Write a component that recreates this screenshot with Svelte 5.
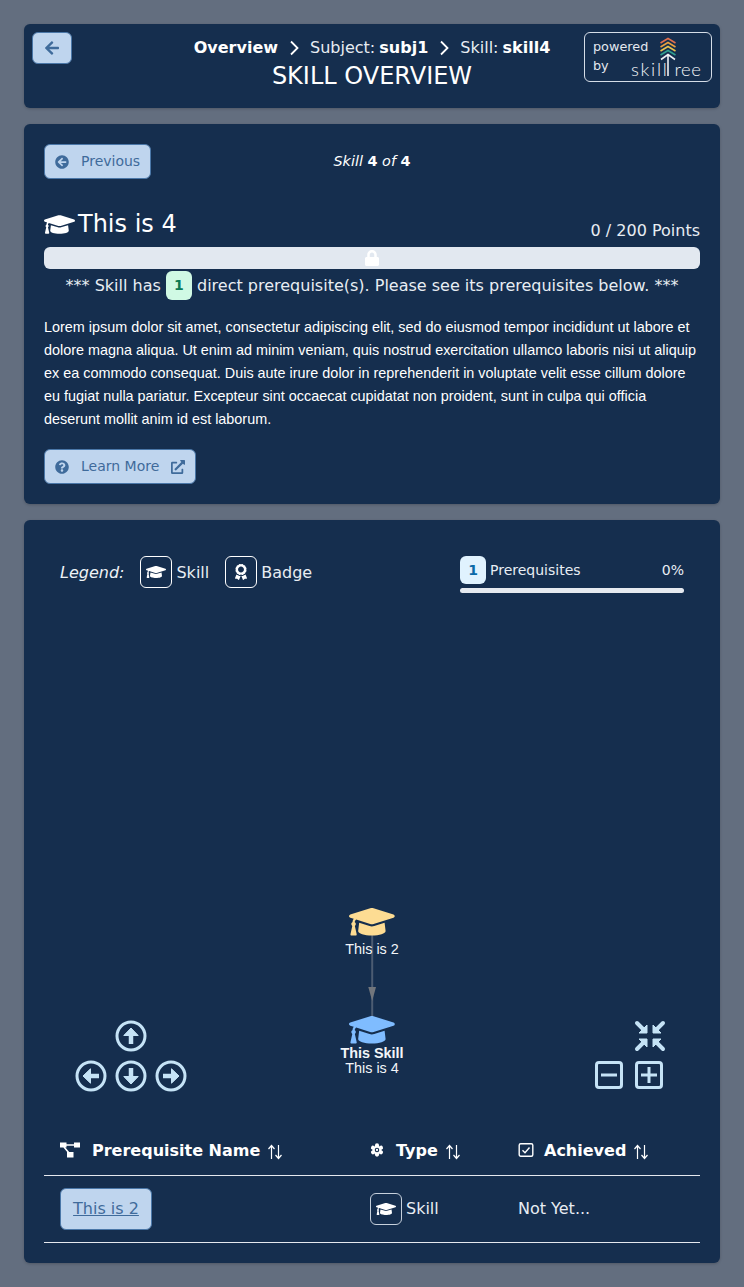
<script>
  const cap = "M622.34 153.2L343.4 67.5c-15.2-4.67-31.6-4.67-46.79 0L17.66 153.2c-23.54 7.23-23.54 38.36 0 45.59l48.63 14.94c-10.67 13.19-17.23 29.28-17.88 46.9C38.78 266.15 32 276.11 32 288c0 10.78 5.68 19.85 13.86 25.65L20.33 428.53C18.11 438.52 25.71 448 35.94 448h56.11c10.24 0 17.84-9.48 15.62-19.47L82.14 313.65C90.32 307.85 96 298.78 96 288c0-11.57-6.47-21.25-15.66-26.87.76-15.02 8.44-28.3 20.69-36.72L296.6 285.5c9.06 2.78 26.44 6.25 46.79 0l278.95-85.7c23.55-7.24 23.55-38.36 0-45.6zM352.79 315.09c-28.53 8.76-52.84 3.92-65.59 0l-145.02-44.55L128 384c0 35.35 85.96 64 192 64s192-28.65 192-64l-14.18-113.47-145.03 44.56z";
  const award = "M97.12 362.63c-8.69-8.69-4.16-6.24-25.12-11.85-9.51-2.55-17.87-7.45-25.43-13.32L1.2 448.7c-4.39 10.77 3.81 22.47 15.43 22.03l52.69-2.01L105.56 507c8 8.44 22.04 5.81 26.43-4.96l52.05-127.62c-10.84 6.04-22.87 9.58-35.31 9.58-19.5 0-37.82-7.59-51.61-21.37zM382.8 448.7l-45.37-111.24c-7.56 5.88-15.92 10.77-25.43 13.32-21.07 5.64-16.45 3.18-25.12 11.85-13.79 13.78-32.12 21.37-51.62 21.37-12.44 0-24.47-3.55-35.31-9.58L252 502.04c4.39 10.77 18.44 13.4 26.43 4.96l36.25-38.28 52.69 2.01c11.62.44 19.82-11.27 15.43-22.03zM263 340c15.28-15.55 17.03-14.21 38.79-20.14 13.89-3.79 24.75-14.84 28.47-28.98 7.48-28.4 5.54-24.97 25.95-45.75 10.17-10.35 14.14-25.44 10.42-39.58-7.47-28.38-7.48-24.42 0-52.83 3.72-14.14-.25-29.23-10.42-39.58-20.41-20.78-18.47-17.36-25.95-45.75-3.72-14.14-14.58-25.19-28.47-28.98-27.88-7.61-24.52-5.62-44.95-26.41-10.17-10.35-25-14.4-38.89-10.61-27.87 7.6-23.98 7.61-51.9 0-13.89-3.79-28.72.25-38.89 10.61-20.41 20.78-17.05 18.8-44.94 26.41-13.89 3.79-24.75 14.84-28.47 28.98-7.47 28.39-5.54 24.97-25.95 45.75-10.17 10.35-14.15 25.44-10.42 39.58 7.47 28.36 7.48 24.4 0 52.82-3.72 14.14.25 29.23 10.42 39.59 20.41 20.78 18.47 17.35 25.95 45.75 3.72 14.14 14.58 25.19 28.47 28.98C104.6 325.96 106.27 325 121 340c13.23 13.47 33.84 15.88 49.74 5.82a39.676 39.676 0 0 1 42.53 0c15.89 10.06 36.5 7.65 49.73-5.82zM97.66 175.96c0-53.03 42.24-96.02 94.34-96.02s94.34 42.99 94.34 96.02-42.24 96.02-94.34 96.02-94.34-42.99-94.34-96.02z";
  const lock = "M400 224h-24v-72C376 68.2 307.8 0 224 0S72 68.2 72 152v72H48c-26.5 0-48 21.5-48 48v192c0 26.5 21.5 48 48 48h352c26.5 0 48-21.5 48-48V272c0-26.5-21.5-48-48-48zm-104 0H152v-72c0-39.7 32.3-72 72-72s72 32.3 72 72v72z";
  const arrowLeft = "M257.5 445.1l-22.2 22.2c-9.4 9.4-24.6 9.4-33.9 0L7 273c-9.4-9.4-9.4-24.6 0-33.9L201.4 44.7c9.4-9.4 24.6-9.4 33.9 0l22.2 22.2c9.5 9.5 9.3 25-.4 34.3L136.6 216H424c13.3 0 24 10.7 24 24v32c0 13.3-10.7 24-24 24H136.6l120.5 114.8c9.8 9.3 10 24.8.4 34.3z";
  const circleLeft = "M256 504C119 504 8 393 8 256S119 8 256 8s248 111 248 248-111 248-248 248zm28.9-143.6L209.4 288H392c13.3 0 24-10.7 24-24v-16c0-13.3-10.7-24-24-24H209.4l75.5-72.4c9.7-9.3 9.9-24.8.4-34.3l-11-10.9c-9.4-9.4-24.6-9.4-33.9 0L107.7 239c-9.4 9.4-9.4 24.6 0 33.9l132.7 132.7c9.4 9.4 24.6 9.4 33.9 0l11-10.9c9.5-9.5 9.3-25-.4-34.3z";
  const question = "M504 256c0 136.997-111.043 248-248 248S8 392.997 8 256C8 119.083 119.043 8 256 8s248 111.083 248 248zM262.655 90c-54.497 0-89.255 22.957-116.549 63.758-3.536 5.286-2.353 12.415 2.715 16.258l34.699 26.31c5.205 3.947 12.621 3.008 16.665-2.122 17.864-22.658 30.113-35.797 57.303-35.797 20.429 0 45.698 13.148 45.698 32.958 0 14.976-12.363 22.667-32.534 33.976C247.128 238.528 216 254.941 216 296v4c0 6.627 5.373 12 12 12h56c6.627 0 12-5.373 12-12v-1.333c0-28.462 83.186-29.647 83.186-106.667 0-58.002-60.165-102-116.531-102zM256 338c-25.365 0-46 20.635-46 46 0 25.364 20.635 46 46 46s46-20.636 46-46c0-25.365-20.635-46-46-46z";
  const external = "M432,320H400a16,16,0,0,0-16,16V448H64V128H208a16,16,0,0,0,16-16V80a16,16,0,0,0-16-16H48A48,48,0,0,0,0,112V464a48,48,0,0,0,48,48H400a48,48,0,0,0,48-48V336A16,16,0,0,0,432,320ZM488,0h-128c-21.37,0-32.05,25.91-17,41l35.73,35.73L135,320.37a24,24,0,0,0,0,34L157.67,377a24,24,0,0,0,34,0L435.28,133.32,471,169c15,15,41,4.5,41-17V24A24,24,0,0,0,488,0Z";
  const navArrows = [
    { x: 131, y: 1036, r: 0 },
    { x: 91, y: 1076, r: -90 },
    { x: 131, y: 1076, r: 180 },
    { x: 171, y: 1076, r: 90 }
  ];
  const gearTeeth = [0, 60, 120, 180, 240, 300];
</script>

{#snippet sortIcon()}
  <svg class="sort" viewBox="0 0 16 16" aria-hidden="true">
    <path d="M4.5 15V2M1.5 5L4.5 1.5L7.5 5M11.5 1V14M8.5 11L11.5 14.5L14.5 11" />
  </svg>
{/snippet}

{#snippet skillBox(cls)}
  <span class="iconbox {cls}">
    <svg viewBox="0 0 640 512" class="boxcap" aria-hidden="true"><path d={cap} /></svg>
  </span>
{/snippet}

<div class="page">
  <header class="card head">
    <button class="btn back" aria-label="Back">
      <svg viewBox="0 0 448 512" aria-hidden="true"><path d={arrowLeft} /></svg>
    </button>
    <div class="headmid">
      <nav class="crumbs">
        <b>Overview</b>
        <svg class="chev" viewBox="0 0 10 16" aria-hidden="true"><path d="M2 1.5L8.5 8L2 14.5" /></svg>
        <span>Subject: <b>subj1</b></span>
        <svg class="chev" viewBox="0 0 10 16" aria-hidden="true"><path d="M2 1.5L8.5 8L2 14.5" /></svg>
        <span>Skill: <b>skill4</b></span>
      </nav>
      <h1>SKILL OVERVIEW</h1>
    </div>
    <div class="powered">
      <div class="powtext"><span>powered</span><span>by</span></div>
      <svg class="logo" viewBox="0 0 76 46" aria-hidden="true">
        <g fill="none" stroke-width="1.6">
          <path d="M32.5 9L40 4.5L47.5 9" stroke="#e0704f" />
          <path d="M32.5 13L40 8.5L47.5 13" stroke="#eba03f" />
          <path d="M32.5 17L40 12.5L47.5 17" stroke="#e9c24f" />
          <path d="M32.5 21L40 16.5L47.5 21" stroke="#2f9f90" />
          <path d="M33 25.5L40 20.5L47 25.5M40 21V42" stroke="#eef1f5" />
        </g>
        <text x="3" y="41.5" class="logotext sk">skill</text>
        <text x="46.5" y="41.5" class="logotext">ree</text>
      </svg>
    </div>
  </header>

  <section class="card overview">
    <div class="navrow">
      <button class="btn prev">
        <svg viewBox="0 0 512 512" aria-hidden="true"><path d={circleLeft} /></svg>
        <span>Previous</span>
      </button>
      <div class="counter"><i>Skill</i> <b>4</b> <i>of</i> <b>4</b></div>
    </div>
    <div class="titlerow">
      <h2>
        <svg viewBox="0 0 640 512" aria-hidden="true"><path d={cap} /></svg>
        <span>This is 4</span>
      </h2>
      <div class="points">0 / 200 Points</div>
    </div>
    <div class="bar">
      <svg viewBox="0 0 448 512" aria-hidden="true"><path d={lock} /></svg>
    </div>
    <p class="prereq">*** Skill has <span class="pill">1</span> direct prerequisite(s). Please see its prerequisites below. ***</p>
    <p class="desc">Lorem ipsum dolor sit amet, consectetur adipiscing elit, sed do eiusmod tempor incididunt ut labore et dolore magna aliqua. Ut enim ad minim veniam, quis nostrud exercitation ullamco laboris nisi ut aliquip ex ea commodo consequat. Duis aute irure dolor in reprehenderit in voluptate velit esse cillum dolore eu fugiat nulla pariatur. Excepteur sint occaecat cupidatat non proident, sunt in culpa qui officia deserunt mollit anim id est laborum.</p>
    <button class="btn learn">
      <svg viewBox="0 0 512 512" aria-hidden="true"><path d={question} /></svg>
      <span>Learn More</span>
      <svg viewBox="0 0 512 512" class="ext" aria-hidden="true"><path d={external} /></svg>
    </button>
  </section>

  <section class="card graphcard">
    <div class="legendrow">
      <div class="legend">
        <i>Legend:</i>
        <div class="legitem">{@render skillBox('')}<span>Skill</span></div>
        <div class="legitem">
          <span class="iconbox"><svg viewBox="0 0 384 512" class="boxaward" aria-hidden="true"><path d={award} /></svg></span>
          <span>Badge</span>
        </div>
      </div>
      <div class="progress">
        <div class="progtop">
          <span class="countbadge">1</span>
          <span class="proglabel">Prerequisites</span>
          <span class="pct">0%</span>
        </div>
        <div class="progbar"></div>
      </div>
    </div>

    <svg class="graph" viewBox="44 600 656 510" role="img" aria-label="Prerequisite graph">
      <path d="M372.2 935V1016" class="edge" />
      <path d="M368.3 987L372.2 1001L376 987Z" class="arrowhead" />
      <path d={cap} transform="translate(349 903.5) scale(0.0715)" fill="#fddc93" />
      <text x="372" y="954" class="nodetext">This is 2</text>
      <path d={cap} transform="translate(349 1011.5) scale(0.0715)" fill="#7fbcff" />
      <text x="372" y="1058" class="nodetext bold">This Skill</text>
      <text x="372" y="1073" class="nodetext">This is 4</text>

      {#each navArrows as a}
        <g transform="translate({a.x} {a.y}) rotate({a.r})" class="navicon">
          <circle r="14" />
          <path d="M0 8V-2" class="shaft" />
          <path d="M-7.2 -0.5L0 -8L7.2 -0.5Z" class="head-tri" />
        </g>
      {/each}

      <g class="navicon" transform="translate(650 1036)">
        <g class="shaft2">
          <path d="M-13 -13L-6 -6M13 -13L6 -6M-13 13L-6 6M13 13L6 6" />
        </g>
        <path class="tri" d="M-11 -3H-3V-11ZM11 -3H3V-11ZM-11 3H-3V11ZM11 3H3V11Z" />
      </g>
      <g class="navicon" transform="translate(609 1075)">
        <rect x="-12.5" y="-12.5" width="25" height="25" rx="2.5" />
        <path class="shaft3" d="M-8 0H8" />
      </g>
      <g class="navicon" transform="translate(649 1075)">
        <rect x="-12.5" y="-12.5" width="25" height="25" rx="2.5" />
        <path class="shaft3" d="M-8 0H8M0 -8V8" />
      </g>
    </svg>

    <table>
      <colgroup><col class="c1" /><col class="c2" /><col class="c3" /></colgroup>
      <thead>
        <tr>
          <th>
            <span class="thin">
              <svg class="thicon" viewBox="0 0 20 16" aria-hidden="true">
                <rect x="0" y="0.5" width="6.5" height="5" />
                <rect x="14" y="0.5" width="6" height="5" />
                <rect x="7" y="10" width="6.5" height="5.5" />
                <path d="M6 3H14M4 5L9 11" class="treeline" />
              </svg>
              <span>Prerequisite Name</span>
              {@render sortIcon()}
            </span>
          </th>
          <th>
            <span class="thin">
              <svg class="thicon gear" viewBox="0 0 16 16" aria-hidden="true">
                {#each gearTeeth as t}
                  <circle cx="8" cy="2.8" r="2.4" transform="rotate({t} 8 8)" />
                {/each}
                <circle cx="8" cy="8" r="5" />
                <circle cx="8" cy="8" r="2.6" class="gearhole" />
                <circle cx="8" cy="8" r="1.3" />
              </svg>
              <span>Type</span>
              {@render sortIcon()}
            </span>
          </th>
          <th>
            <span class="thin">
              <svg class="thicon small" viewBox="0 0 16 16" aria-hidden="true">
                <rect x="1.2" y="1.7" width="13.6" height="12.6" rx="1.5" class="chk" />
                <path d="M4.5 8.2L7 10.7L11.5 5.5" class="chk" />
              </svg>
              <span>Achieved</span>
              {@render sortIcon()}
            </span>
          </th>
        </tr>
      </thead>
      <tbody>
        <tr>
          <td><button class="btn link"><u>This is 2</u></button></td>
          <td><div class="legitem">{@render skillBox('dim')}<span>Skill</span></div></td>
          <td>Not Yet...</td>
        </tr>
      </tbody>
    </table>
  </section>
</div>

<style>
  :global(body) {
    margin: 0;
    background: #636e7f;
  }
  .page {
    padding: 24px;
    display: flex;
    flex-direction: column;
    gap: 16px;
    font-family: "DejaVu Sans", sans-serif;
    color: #fff;
  }
  .card {
    background: #152e4e;
    border-radius: 6px;
    box-shadow: 0 1px 3px rgba(0, 0, 0, 0.2);
  }
  .btn {
    font-family: inherit;
    font-size: 14px;
    background: #bfd5ee;
    color: #3f6b9b;
    border: 1px solid #4a77a8;
    border-radius: 6px;
    display: flex;
    align-items: center;
    padding: 0;
    box-sizing: border-box;
  }
  .btn svg {
    fill: #3f6b9b;
    flex: none;
  }

  .head {
    display: grid;
    grid-template-columns: 1fr auto 1fr;
    padding: 8px;
    height: 84px;
    box-sizing: border-box;
  }
  .back {
    width: 40px;
    height: 32px;
    justify-content: center;
    justify-self: start;
  }
  .back svg { width: 16px; height: 16px; }
  .headmid { text-align: center; }
  .crumbs {
    display: flex;
    align-items: center;
    font-size: 16px;
    line-height: 24px;
    height: 24px;
    margin-top: 4px;
    color: #e8edf3;
  }
  .crumbs span { word-spacing: -1px; }
  .crumbs b { color: #fff; }
  .chev {
    width: 10px;
    height: 16px;
    margin: 0 11px;
    fill: none;
    stroke: #fff;
    stroke-width: 1.8;
  }
  h1 {
    font-size: 24px;
    font-weight: 400;
    line-height: 32px;
    margin: 0;
  }
  .powered {
    justify-self: end;
    width: 128px;
    height: 50px;
    box-sizing: border-box;
    border: 1px solid #d5dde7;
    border-radius: 6px;
    position: relative;
    display: flex;
  }
  .powtext {
    display: flex;
    flex-direction: column;
    font-size: 12.8px;
    line-height: 19px;
    color: #e3e8ef;
    padding: 4px 0 0 8px;
  }
  .logo {
    position: absolute;
    left: 43px;
    top: 1px;
    width: 76px;
    height: 46px;
  }
  .logotext {
    font-family: "Lato", sans-serif;
    font-weight: 300;
    font-size: 18.5px;
    letter-spacing: 0.5px;
    fill: #f4f6f9;
  }
  .logotext.sk { letter-spacing: 1.7px; }

  .overview {
    padding: 20px;
    height: 380px;
    box-sizing: border-box;
  }
  .navrow {
    display: grid;
    grid-template-columns: 1fr auto 1fr;
    align-items: center;
  }
  .prev {
    width: 107px;
    height: 35px;
    padding: 0 0 1px 10px;
    gap: 12px;
  }
  .prev svg, .learn svg { width: 14px; height: 14px; margin-top: 1px; }
  .counter {
    font-size: 14.4px;
    white-space: pre-wrap;
    color: #fff;
    margin-top: -2px;
  }
  .titlerow {
    display: flex;
    justify-content: space-between;
    align-items: flex-end;
    height: 35px;
    margin-top: 29px;
  }
  h2 {
    margin: 0;
    align-self: flex-start;
    font-size: 24px;
    line-height: 32px;
    font-weight: 400;
    display: flex;
    align-items: center;
    gap: 3px;
  }
  h2 svg {
    width: 31px;
    height: 25px;
    fill: #fff;
  }
  .points {
    font-size: 16px;
    line-height: 24px;
    color: #e8edf3;
  }
  .bar {
    height: 22px;
    background: #e2e8f0;
    border-radius: 6px;
    margin-top: 4px;
    display: flex;
    justify-content: center;
    padding-top: 3px;
    box-sizing: border-box;
  }
  .bar svg {
    width: 14px;
    height: 16px;
    fill: #fff;
  }
  .prereq {
    margin: 2px 0 0;
    font-size: 16px;
    line-height: 29px;
    height: 29px;
    text-align: center;
    color: #e8edf3;
  }
  .pill {
    display: inline-block;
    width: 26px;
    height: 29px;
    line-height: 29px;
    border-radius: 6px;
    background: #d0f9e4;
    color: #0d7a55;
    font-size: 14px;
    font-weight: 700;
    vertical-align: top;
  }
  .desc {
    margin: 16px 0 0;
    font-family: "Liberation Sans", sans-serif;
    font-size: 14.4px;
    line-height: 23px;
    color: #fff;
  }
  .learn {
    width: 152px;
    height: 35px;
    padding: 0 0 1px 10px;
    margin-top: 18px;
  }
  .learn span { margin-left: 12px; }
  .learn .ext { margin-left: 12px; }

  .graphcard {
    padding: 20px;
    height: 743px;
    box-sizing: border-box;
  }
  .legendrow {
    display: flex;
    justify-content: space-between;
    padding: 16px 16px 0;
    height: 60px;
    box-sizing: border-box;
  }
  .legend {
    display: flex;
    align-items: center;
    font-size: 16px;
    height: 32px;
    gap: 16px;
    color: #eef2f6;
  }
  .legitem {
    display: flex;
    align-items: center;
    gap: 4px;
    font-size: 16px;
    color: #e8edf3;
  }
  .iconbox {
    width: 32px;
    height: 32px;
    box-sizing: border-box;
    border: 1px solid #fff;
    border-radius: 6px;
    display: flex;
    align-items: center;
    justify-content: center;
  }
  .iconbox.dim { border-color: #c6d0dc; }
  .boxcap { width: 20px; height: 16px; fill: #fff; }
  .boxaward { width: 12px; height: 16px; fill: #fff; }
  .progress { width: 224px; }
  .progtop {
    display: flex;
    align-items: center;
    height: 28px;
    font-size: 14px;
    color: #e8edf3;
  }
  .countbadge {
    width: 26px;
    height: 28px;
    border-radius: 6px;
    background: #e0f2fe;
    color: #0a6aa8;
    font-weight: 700;
    font-size: 14px;
    line-height: 28px;
    text-align: center;
    margin-right: 4px;
  }
  .pct { margin-left: auto; }
  .progbar {
    height: 5px;
    margin-top: 4px;
    background: #e5e9ef;
    border-radius: 3px;
  }

  .graph {
    display: block;
    width: 656px;
    height: 510px;
  }
  .edge { stroke: #4c5c72; stroke-width: 2; fill: none; }
  .arrowhead { fill: #72767c; }
  .nodetext {
    font-family: "Liberation Sans", sans-serif;
    font-size: 14.4px;
    fill: #f2f5f8;
    text-anchor: middle;
  }
  .nodetext.bold { font-weight: 700; }
  .navicon circle, .navicon rect {
    fill: none;
    stroke: #c5e3f6;
    stroke-width: 3;
  }
  .navicon .shaft { stroke: #c5e3f6; stroke-width: 4.5; fill: none; }
  .navicon .head-tri { fill: #c5e3f6; stroke: #c5e3f6; stroke-width: 1; stroke-linejoin: round; }
  .navicon .shaft2 path { stroke: #c5e3f6; stroke-width: 4; fill: none; stroke-linecap: round; }
  .navicon .tri { fill: #c5e3f6; stroke: #c5e3f6; stroke-linejoin: round; }
  .navicon .shaft3 { stroke: #c5e3f6; stroke-width: 3; fill: none; }

  table {
    width: 656px;
    border-collapse: collapse;
    table-layout: fixed;
    font-size: 16px;
    color: #e8edf3;
  }
  .c1 { width: 310px; }
  .c2 { width: 148px; }
  th {
    text-align: left;
    height: 65px;
    padding: 30px 16px 0;
    box-sizing: border-box;
    border-bottom: 1px solid #e5e9ef;
    font-weight: 700;
    color: #fff;
    vertical-align: top;
  }
  .thin {
    display: flex;
    align-items: center;
    height: 20px;
    white-space: nowrap;
  }
  .thicon { width: 20px; height: 16px; fill: #fff; margin-right: 12px; }
  .thicon.small { width: 16px; height: 16px; margin-right: 10px; }
  .thicon.gear { width: 14px; height: 14px; margin-right: 12px; }
  .gearhole { fill: #152e4e; }
  .treeline { stroke: #fff; stroke-width: 1.6; fill: none; }
  .chk { fill: none; stroke: #fff; stroke-width: 1.4; }
  .sort {
    width: 16px;
    height: 16px;
    margin-left: 7px;
    margin-top: 3px;
    fill: none;
    stroke: #fff;
    stroke-width: 1.2;
  }
  td {
    height: 67px;
    padding: 0 16px;
    box-sizing: border-box;
    border-bottom: 1px solid #e5e9ef;
  }
  .link {
    width: 92px;
    height: 42px;
    font-size: 16px;
    justify-content: center;
  }
</style>
